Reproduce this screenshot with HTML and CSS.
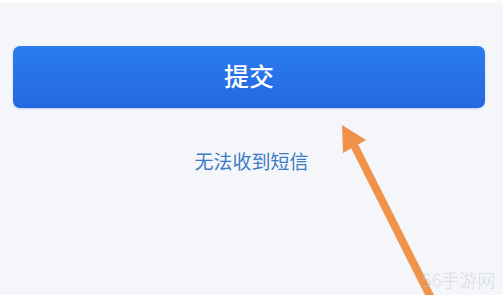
FILE: index.html
```html
<!DOCTYPE html>
<html lang="zh-CN">
<head>
<meta charset="utf-8">
<link rel="stylesheet" href="styles.css">
</head>
<body>
<div class="topbar"></div>
<main class="content">
  <button class="submit">提交</button>
  <a class="nosms">无法收到短信</a>
</main>
<svg class="arrow" width="503" height="295" viewBox="0 0 503 295">
  <line x1="354" y1="145" x2="432" y2="300" stroke="#f0924a" stroke-width="8"/>
  <polygon points="342,125 366,140 343,153" fill="#f0924a"/>
</svg>
<div class="watermark">56手游网</div>
</body>
</html>
```
FILE: styles.css
```css
html, body {
  margin: 0;
  padding: 0;
}
body {
  width: 503px;
  height: 295px;
  overflow: hidden;
  background: #f5f6fa;
  font-family: "Noto Sans CJK SC", "Noto Sans", sans-serif;
  position: relative;
}
.topbar {
  height: 3px;
  background: #fdfdfe;
}
.content {
  display: flex;
  flex-direction: column;
  align-items: center;
  padding: 43px 18px 0 13px;
}
.submit {
  width: 100%;
  height: 62px;
  border: none;
  border-radius: 7px;
  background: linear-gradient(180deg, #2a7df0 0%, #2567e0 100%);
  box-shadow: 0 1px 2px rgba(40, 100, 220, 0.25);
  color: #ffffff;
  font-family: inherit;
  font-size: 25px;
  font-weight: 500;
  padding: 0 0 4px 0;
}
.nosms {
  margin-top: 40px;
  color: #3a7cc6;
  font-size: 19px;
  line-height: 26px;
  margin-right: -5px;
}
.arrow {
  position: absolute;
  left: 0;
  top: 0;
}
.watermark {
  position: absolute;
  left: 422px;
  top: 266px;
  font-size: 18px;
  font-weight: 300;
  color: rgba(195, 200, 206, 0.6);
}
```
